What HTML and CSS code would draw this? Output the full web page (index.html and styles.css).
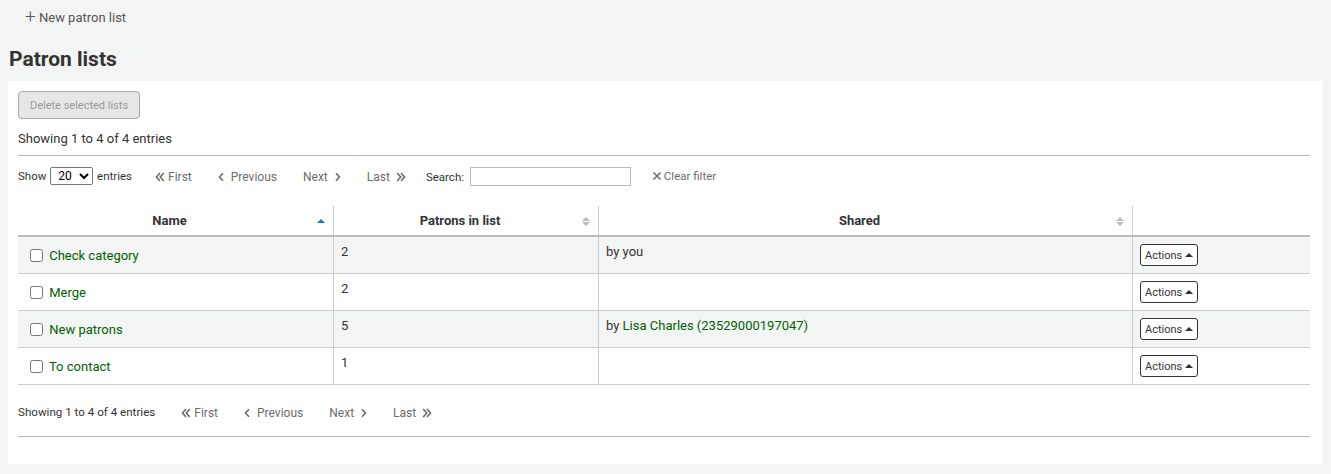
FILE: index.html
```html
<!DOCTYPE html>
<html lang="en">
<head>
    <meta charset="UTF-8">
    <meta name="viewport" content="width=device-width, initial-scale=1.0">
    <title>Patron lists</title>
    <link rel="stylesheet" href="styles.css">
</head>
<body>

    <div class="toolbar">
        <a href="#" class="toolbar-btn"><span class="plus">+</span> New patron list</a>
    </div>

    <h1>Patron lists</h1>

    <div class="page-section">
        <button class="delete-btn" disabled>Delete selected lists</button>
        <div class="info top-info">Showing 1 to 4 of 4 entries</div>

        <div class="controls">
            <div class="length">Show
                <select>
                    <option>20</option>
                </select>
                entries
            </div>
            <div class="paging">
                <span class="page-btn first">
                    <svg width="10" height="10" viewBox="0 0 10 10"><path d="M5 1 L1.5 5 L5 9 M8.8 1 L5.3 5 L8.8 9" fill="none" stroke="#6c6c6c" stroke-width="1.6"/></svg>First</span>
                <span class="page-btn">
                    <svg width="7" height="10" viewBox="0 0 7 10"><path d="M5 1.2 L1.5 5 L5 8.8" fill="none" stroke="#6c6c6c" stroke-width="1.6"/></svg>Previous</span>
                <span class="page-btn">Next
                    <svg width="7" height="10" viewBox="0 0 7 10"><path d="M2 1.2 L5.5 5 L2 8.8" fill="none" stroke="#6c6c6c" stroke-width="1.6"/></svg></span>
                <span class="page-btn">Last
                    <svg width="10" height="10" viewBox="0 0 10 10"><path d="M1.2 1 L4.7 5 L1.2 9 M5 1 L8.5 5 L5 9" fill="none" stroke="#6c6c6c" stroke-width="1.6"/></svg></span>
            </div>
            <label class="search">Search: <input type="text"></label>
            <span class="clear-filter">
                <svg width="10" height="10" viewBox="0 0 10 10"><path d="M1.5 1.5 L8.5 8.5 M8.5 1.5 L1.5 8.5" fill="none" stroke="#6c6c6c" stroke-width="1.6"/></svg>Clear filter</span>
        </div>

        <table id="patron-lists">
            <thead>
                <tr>
                    <th class="col-name">Name <span class="sort asc"></span></th>
                    <th class="col-count">Patrons in list <span class="sort both"></span></th>
                    <th class="col-shared">Shared <span class="sort both"></span></th>
                    <th class="col-actions"></th>
                </tr>
            </thead>
            <tbody>
                <tr>
                    <td class="name"><input type="checkbox"> <a href="#">Check category</a></td>
                    <td>2</td>
                    <td>by you</td>
                    <td><button class="actions-btn">Actions <span class="caret"></span></button></td>
                </tr>
                <tr>
                    <td class="name"><input type="checkbox"> <a href="#">Merge</a></td>
                    <td>2</td>
                    <td></td>
                    <td><button class="actions-btn">Actions <span class="caret"></span></button></td>
                </tr>
                <tr>
                    <td class="name"><input type="checkbox"> <a href="#">New patrons</a></td>
                    <td>5</td>
                    <td>by <a href="#">Lisa Charles (23529000197047)</a></td>
                    <td><button class="actions-btn">Actions <span class="caret"></span></button></td>
                </tr>
                <tr>
                    <td class="name"><input type="checkbox"> <a href="#">To contact</a></td>
                    <td>1</td>
                    <td></td>
                    <td><button class="actions-btn">Actions <span class="caret"></span></button></td>
                </tr>
            </tbody>
        </table>

        <div class="bottom">
            <div class="info">Showing 1 to 4 of 4 entries</div>
            <div class="paging">
                <span class="page-btn first">
                    <svg width="10" height="10" viewBox="0 0 10 10"><path d="M5 1 L1.5 5 L5 9 M8.8 1 L5.3 5 L8.8 9" fill="none" stroke="#6c6c6c" stroke-width="1.6"/></svg>First</span>
                <span class="page-btn">
                    <svg width="7" height="10" viewBox="0 0 7 10"><path d="M5 1.2 L1.5 5 L5 8.8" fill="none" stroke="#6c6c6c" stroke-width="1.6"/></svg>Previous</span>
                <span class="page-btn">Next
                    <svg width="7" height="10" viewBox="0 0 7 10"><path d="M2 1.2 L5.5 5 L2 8.8" fill="none" stroke="#6c6c6c" stroke-width="1.6"/></svg></span>
                <span class="page-btn">Last
                    <svg width="10" height="10" viewBox="0 0 10 10"><path d="M1.2 1 L4.7 5 L1.2 9 M5 1 L8.5 5 L5 9" fill="none" stroke="#6c6c6c" stroke-width="1.6"/></svg></span>
            </div>
        </div>
    </div>

</body>
</html>
```

FILE: styles.css
```css
html, body {
    margin: 0;
    padding: 0;
    font-family: Roboto, "Liberation Sans", sans-serif;
    font-size: 13px;
    color: #333;
}
body {
    background-color: #f3f4f4;
    padding: 0 8px;
}
.toolbar {
    height: 33px;
    display: flex;
    align-items: center;
    padding-left: 17px;
}
.toolbar-btn {
    color: #555;
    text-decoration: none;
    font-size: 13px;
}
.toolbar-btn .plus {
    font-size: 19px;
    line-height: 13px;
    font-weight: 300;
    position: relative;
    top: 1px;
}
h1 {
    font-size: 21px;
    font-weight: bold;
    margin: 14px 0 10px 1px;
    line-height: 24px;
}
.page-section {
    background-color: #fff;
    padding: 10px 13px 27px 10px;
}
.delete-btn {
    font-family: inherit;
    font-size: 11px;
    color: #999;
    background-color: #e6e6e6;
    border: 1px solid #a8a8a8;
    border-radius: 4px;
    height: 28px;
    width: 122px;
    padding: 0;
    display: block;
}
.top-info {
    margin: 12px 0 0;
    line-height: 16px;
    padding-bottom: 8px;
    border-bottom: 1px solid #bbb;
}
.controls {
    display: flex;
    align-items: center;
    height: 40px;
    font-size: 11.5px;
}
.length select {
    font-family: inherit;
    font-size: 12px;
    height: 18px;
    width: 43px;
    padding: 0 0 0 3px;
    margin: 0 1px;
}
.paging {
    display: flex;
    align-items: center;
    color: #6c6c6c;
    margin-left: 23px;
    padding-top: 2px;
}
.page-btn {
    display: inline-flex;
    align-items: center;
    gap: 6px;
    margin-right: 26px;
    font-size: 12px;
}
.page-btn.first {
    gap: 3px;
}
.search {
    margin-left: -6px;
    color: #333;
}
.search input {
    width: 155px;
    height: 15px;
    border: 1px solid #bbb;
    margin-left: 3px;
    padding: 1px 2px;
}
.clear-filter {
    display: inline-flex;
    align-items: center;
    gap: 2px;
    margin-left: 21px;
    color: #6c6c6c;
}
table {
    width: 100%;
    border-collapse: collapse;
    margin-top: 10px;
}
th {
    position: relative;
    font-weight: bold;
    text-align: center;
    padding: 7px 20px 7px 8px;
    line-height: 15px;
    border-bottom: 2px solid #bcbcbc;
    border-left: 1px solid #ccc;
}
th:first-child, td:first-child {
    border-left: none;
}
.col-name { width: 287px; }
.col-count { width: 236px; }
.col-shared { width: 505px; }
.sort {
    position: absolute;
    right: 8px;
    top: 11px;
    width: 8px;
    height: 9px;
}
.sort.asc::before {
    content: "";
    position: absolute;
    left: 0;
    top: 2px;
    border-left: 4px solid transparent;
    border-right: 4px solid transparent;
    border-bottom: 4px solid #1c6ecf;
}
.sort.both::before, .sort.both::after {
    content: "";
    position: absolute;
    left: 0;
    border-left: 4px solid transparent;
    border-right: 4px solid transparent;
}
.sort.both::before {
    top: 0;
    border-bottom: 4px solid #bbb;
}
.sort.both::after {
    top: 5px;
    border-top: 4px solid #bbb;
}
td {
    padding: 7px 8px 7px 7px;
    line-height: 16px;
    vertical-align: top;
    border-bottom: 1px solid #ccc;
    border-left: 1px solid #ccc;
}
tbody tr:nth-child(odd) td {
    background-color: #f3f4f4;
}
td.name {
    padding: 11px 8px 3px 8px;
    line-height: 16px;
}
td.name input {
    margin: 0 3px 0 4px;
    width: 13px;
    height: 13px;
    vertical-align: -2px;
}
a {
    color: #006100;
    text-decoration: none;
}
.actions-btn {
    font-family: inherit;
    font-size: 11px;
    color: #333;
    background-color: #fff;
    border: 1px solid #333;
    border-radius: 3px;
    height: 22px;
    width: 58px;
    padding: 0;
    display: block;
}
.caret {
    display: inline-block;
    border-left: 4px solid transparent;
    border-right: 4px solid transparent;
    border-bottom: 4px solid #333;
    vertical-align: 2px;
}
.bottom {
    display: flex;
    align-items: center;
    height: 51px;
    border-bottom: 1px solid #bbb;
}
.bottom .info {
    font-size: 11.6px;
    padding-top: 3px;
}
.bottom .paging {
    margin-left: 26px;
    padding-top: 4px;
}
```
